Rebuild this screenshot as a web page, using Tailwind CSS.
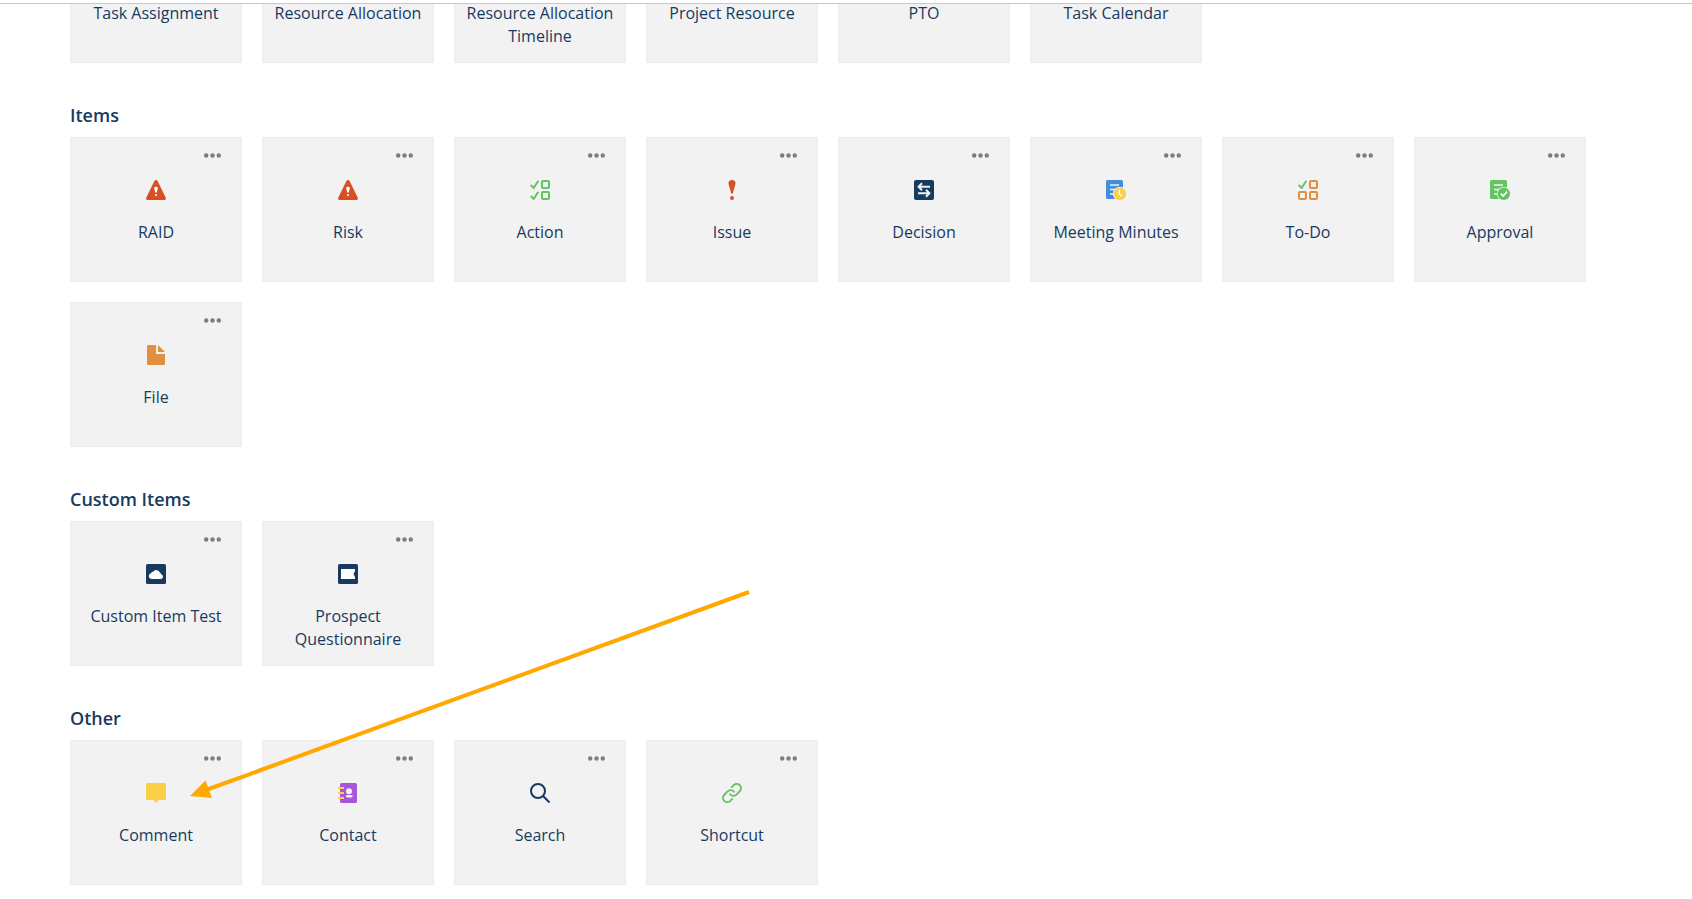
<!DOCTYPE html>
<html lang="en">
<head>
<meta charset="utf-8">
<title>Items</title>
<script src="https://cdn.jsdelivr.net/npm/@tailwindcss/browser@4"></script>
</head>
<body class="relative min-h-screen overflow-x-hidden bg-white font-['Open_Sans',sans-serif] text-base text-[#173a61]">

<svg class="hidden" aria-hidden="true">
  <symbol id="dots" viewBox="0 0 18 6"><g fill="#7d7d7d"><circle cx="2.2" cy="3.5" r="2.2"/><circle cx="8.5" cy="3.5" r="2.2"/><circle cx="14.8" cy="3.5" r="2.2"/></g></symbol>
  <symbol id="warn" viewBox="0 0 20 20"><path fill="#d84f26" d="M8.4.9C9.1-.3 10.9-.3 11.6.9L19.8 17.8C20.3 19 19.7 20 18.5 20H1.5C.3 20-.3 19 .2 17.8Z"/><path fill="#fff" d="M8.3 8.3C8.3 7 9 6.800 10 6.800S11.700 7 11.700 8.300L10.800 12.500H9.200Z"/><circle cx="10" cy="15" r="1.100" fill="#fff"/></symbol>
  <symbol id="action" viewBox="0 0 20 20"><g fill="none" stroke="#62c462" stroke-width="2"><path d="M.7 5 3.7 8 8.3.8M.7 16 3.7 19 8.3 11.8"/><rect x="12" y="1" width="7" height="7" rx="1"/><rect x="12" y="12" width="7" height="7" rx="1"/></g></symbol>
  <symbol id="issue" viewBox="0 0 20 20"><path fill="#d84f26" d="M6.5 3.2C6.5 1 7.9 0 10 0S13.5 1 13.5 3.2C13.5 5.5 11.3 10 10.9 13.5H9.1C8.7 10 6.5 5.5 6.5 3.2Z"/><circle cx="10" cy="18" r="2" fill="#d84f26"/></symbol>
  <symbol id="decision" viewBox="0 0 20 20"><rect width="20" height="20" rx="2" fill="#173a61"/><path fill="none" stroke="#f1f1f1" stroke-width="2" d="M16 6.8H5M8 3.2 4.6 6.8 8 10.2M4 13.2H15M12 9.8 15.4 13.2 12 16.8"/></symbol>
  <symbol id="minutes" viewBox="0 0 20 20"><path fill="#448cde" d="M1.5 0H15.5Q17 0 17 1.5V19H1.5Q0 19 0 17.500V1.500Q0 0 1.500 0Z"/><path stroke="#f1f1f1" stroke-width="1.500" d="M4 5H13M4 9.500H9M4 14H8"/><circle cx="13.800" cy="13.800" r="7" fill="#f1f1f1"/><circle cx="13.800" cy="13.800" r="6.200" fill="#facf46"/><path fill="none" stroke="#fff" stroke-width="1.600" d="M13.300 9.500V14L16 16.500"/></symbol>
  <symbol id="todo" viewBox="0 0 20 20"><g fill="none" stroke="#e0903e" stroke-width="2"><path stroke="#62c462" d="M.7 5 3.700 8 8.300.8"/><rect x="12" y="1" width="7" height="7" rx="1"/><rect x="1" y="12" width="7" height="7" rx="1"/><rect x="12" y="12" width="7" height="7" rx="1"/></g></symbol>
  <symbol id="approval" viewBox="0 0 20 20"><path fill="#62c462" d="M1.500 0H15.500Q17 0 17 1.500V19H1.500Q0 19 0 17.500V1.500Q0 0 1.500 0Z"/><path stroke="#f1f1f1" stroke-width="1.500" d="M4 5H13M4 9.500H9M4 14H8"/><circle cx="13.800" cy="13.800" r="7" fill="#f1f1f1"/><circle cx="13.800" cy="13.800" r="6.200" fill="#62c462"/><path fill="none" stroke="#fff" stroke-width="1.700" d="M10.800 13.600 13.200 16 17 11.600"/></symbol>
  <symbol id="file" viewBox="0 0 20 20"><path fill="#e0903e" d="M2.500 0H10V9H19V18.500Q19 20 17.500 20H2.500Q1 20 1 18.500V1.500Q1 0 2.500 0ZM12 0 19 7H12Z"/></symbol>
  <symbol id="cloud" viewBox="0 0 20 20"><rect width="20" height="20" rx="1.500" fill="#173a61"/><path fill="#fff" d="M5.500 15A2.900 2.900 0 0 1 5 9.300A2.400 2.400 0 0 1 7.600 7.600A3.500 3.500 0 0 1 13.800 8.600A2.500 2.500 0 0 1 15.300 10.500A2.300 2.300 0 0 1 15 15Z"/></symbol>
  <symbol id="ticket" viewBox="0 0 20 20"><rect width="20" height="20" rx="1.500" fill="#173a61"/><path fill="#fff" d="M3 5H17V7L15.500 10 17 13V15H3Z"/></symbol>
  <symbol id="comment" viewBox="0 0 20 20"><path fill="#facf46" d="M1.500 0H18.500Q20 0 20 1.500V15.500Q20 17 18.500 17H12.500L10 20 7.500 17H1.500Q0 17 0 15.500V1.500Q0 0 1.500 0Z"/></symbol>
  <symbol id="contact" viewBox="0 0 20 20"><rect x="2" width="17" height="20" rx="1.500" fill="#a557d8"/><path stroke="#facf46" stroke-width="2" d="M0 5H6M0 10H6M0 15H6"/><circle cx="11" cy="8.200" r="3" fill="#f4eff8"/><rect x="8" y="12" width="6.500" height="2.500" rx="1.200" fill="#f4eff8"/></symbol>
  <symbol id="search" viewBox="0 0 20 20"><g fill="none" stroke="#173a61" stroke-width="2"><circle cx="8" cy="8" r="7"/><path d="M12.800 12.800 19.500 19.500"/></g></symbol>
  <symbol id="link" viewBox="0 0 24 24"><g fill="none" stroke="#62c462" stroke-width="2.300" stroke-linecap="round"><path d="M9.700 13.500a5 5 0 0 0 7.600.4l4-4a5.150 5.150 0 0 0-7.300-7.300l-2.300 2.300"/><path d="M14.300 10.500a5 5 0 0 0-7.600-.4l-4 4a5.150 5.150 0 0 0 7.300 7.300l2.300-2.300"/></g></symbol>
</svg>

<div class="h-1 border-b border-[#c8c8c8]"></div>

<main class="overflow-hidden px-[70px] pb-3">
  <section class="-mt-[86px]" aria-label="Resources">
    <ul class="flex flex-wrap gap-5">
      <li class="h-[145px] w-[172px] border border-[#ececec] bg-[#f2f2f2] px-2 pt-[83px] text-center leading-[23px]"><a href="#">Task Assignment</a></li>
      <li class="h-[145px] w-[172px] border border-[#ececec] bg-[#f2f2f2] px-2 pt-[83px] text-center leading-[23px]"><a href="#">Resource Allocation</a></li>
      <li class="h-[145px] w-[172px] border border-[#ececec] bg-[#f2f2f2] px-2 pt-[83px] text-center leading-[23px]"><a href="#">Resource Allocation Timeline</a></li>
      <li class="h-[145px] w-[172px] border border-[#ececec] bg-[#f2f2f2] px-2 pt-[83px] text-center leading-[23px]"><a href="#">Project Resource</a></li>
      <li class="h-[145px] w-[172px] border border-[#ececec] bg-[#f2f2f2] px-2 pt-[83px] text-center leading-[23px]"><a href="#">PTO</a></li>
      <li class="h-[145px] w-[172px] border border-[#ececec] bg-[#f2f2f2] px-2 pt-[83px] text-center leading-[23px]"><a href="#">Task Calendar</a></li>
    </ul>
  </section>

  <section class="pt-[39px]">
    <h2 class="mb-[9px] text-lg leading-[26px] font-semibold">Items</h2>
    <ul class="flex flex-wrap gap-5">
      <li class="flex h-[145px] w-[172px] flex-col items-center border border-[#ececec] bg-[#f2f2f2] px-2 pt-[14px] text-center leading-[23px]"><button class="mr-[11px] self-end" aria-label="RAID options"><svg class="block h-1.5 w-[18px]"><use href="#dots"/></svg></button><svg class="mt-[22px] size-5 shrink-0"><use href="#warn"/></svg><a href="#" class="mt-[21px]">RAID</a></li>
      <li class="flex h-[145px] w-[172px] flex-col items-center border border-[#ececec] bg-[#f2f2f2] px-2 pt-[14px] text-center leading-[23px]"><button class="mr-[11px] self-end" aria-label="Risk options"><svg class="block h-1.5 w-[18px]"><use href="#dots"/></svg></button><svg class="mt-[22px] size-5 shrink-0"><use href="#warn"/></svg><a href="#" class="mt-[21px]">Risk</a></li>
      <li class="flex h-[145px] w-[172px] flex-col items-center border border-[#ececec] bg-[#f2f2f2] px-2 pt-[14px] text-center leading-[23px]"><button class="mr-[11px] self-end" aria-label="Action options"><svg class="block h-1.5 w-[18px]"><use href="#dots"/></svg></button><svg class="mt-[22px] size-5 shrink-0"><use href="#action"/></svg><a href="#" class="mt-[21px]">Action</a></li>
      <li class="flex h-[145px] w-[172px] flex-col items-center border border-[#ececec] bg-[#f2f2f2] px-2 pt-[14px] text-center leading-[23px]"><button class="mr-[11px] self-end" aria-label="Issue options"><svg class="block h-1.5 w-[18px]"><use href="#dots"/></svg></button><svg class="mt-[22px] size-5 shrink-0"><use href="#issue"/></svg><a href="#" class="mt-[21px]">Issue</a></li>
      <li class="flex h-[145px] w-[172px] flex-col items-center border border-[#ececec] bg-[#f2f2f2] px-2 pt-[14px] text-center leading-[23px]"><button class="mr-[11px] self-end" aria-label="Decision options"><svg class="block h-1.5 w-[18px]"><use href="#dots"/></svg></button><svg class="mt-[22px] size-5 shrink-0"><use href="#decision"/></svg><a href="#" class="mt-[21px]">Decision</a></li>
      <li class="flex h-[145px] w-[172px] flex-col items-center border border-[#ececec] bg-[#f2f2f2] px-2 pt-[14px] text-center leading-[23px]"><button class="mr-[11px] self-end" aria-label="Meeting Minutes options"><svg class="block h-1.5 w-[18px]"><use href="#dots"/></svg></button><svg class="mt-[22px] size-5 shrink-0"><use href="#minutes"/></svg><a href="#" class="mt-[21px]">Meeting Minutes</a></li>
      <li class="flex h-[145px] w-[172px] flex-col items-center border border-[#ececec] bg-[#f2f2f2] px-2 pt-[14px] text-center leading-[23px]"><button class="mr-[11px] self-end" aria-label="To-Do options"><svg class="block h-1.5 w-[18px]"><use href="#dots"/></svg></button><svg class="mt-[22px] size-5 shrink-0"><use href="#todo"/></svg><a href="#" class="mt-[21px]">To-Do</a></li>
      <li class="flex h-[145px] w-[172px] flex-col items-center border border-[#ececec] bg-[#f2f2f2] px-2 pt-[14px] text-center leading-[23px]"><button class="mr-[11px] self-end" aria-label="Approval options"><svg class="block h-1.5 w-[18px]"><use href="#dots"/></svg></button><svg class="mt-[22px] size-5 shrink-0"><use href="#approval"/></svg><a href="#" class="mt-[21px]">Approval</a></li>
      <li class="flex h-[145px] w-[172px] flex-col items-center border border-[#ececec] bg-[#f2f2f2] px-2 pt-[14px] text-center leading-[23px]"><button class="mr-[11px] self-end" aria-label="File options"><svg class="block h-1.5 w-[18px]"><use href="#dots"/></svg></button><svg class="mt-[22px] size-5 shrink-0"><use href="#file"/></svg><a href="#" class="mt-[21px]">File</a></li>
    </ul>
  </section>

  <section class="pt-[39px]">
    <h2 class="mb-[9px] text-lg leading-[26px] font-semibold">Custom Items</h2>
    <ul class="flex flex-wrap gap-5">
      <li class="flex h-[145px] w-[172px] flex-col items-center border border-[#ececec] bg-[#f2f2f2] px-2 pt-[14px] text-center leading-[23px]"><button class="mr-[11px] self-end" aria-label="Custom Item Test options"><svg class="block h-1.5 w-[18px]"><use href="#dots"/></svg></button><svg class="mt-[22px] size-5 shrink-0"><use href="#cloud"/></svg><a href="#" class="mt-[21px]">Custom Item Test</a></li>
      <li class="flex h-[145px] w-[172px] flex-col items-center border border-[#ececec] bg-[#f2f2f2] px-2 pt-[14px] text-center leading-[23px]"><button class="mr-[11px] self-end" aria-label="Prospect Questionnaire options"><svg class="block h-1.5 w-[18px]"><use href="#dots"/></svg></button><svg class="mt-[22px] size-5 shrink-0"><use href="#ticket"/></svg><a href="#" class="mt-[21px]">Prospect Questionnaire</a></li>
    </ul>
  </section>

  <section class="pt-[39px]">
    <h2 class="mb-[9px] text-lg leading-[26px] font-semibold">Other</h2>
    <ul class="flex flex-wrap gap-5">
      <li class="flex h-[145px] w-[172px] flex-col items-center border border-[#ececec] bg-[#f2f2f2] px-2 pt-[14px] text-center leading-[23px]"><button class="mr-[11px] self-end" aria-label="Comment options"><svg class="block h-1.5 w-[18px]"><use href="#dots"/></svg></button><svg class="mt-[22px] size-5 shrink-0"><use href="#comment"/></svg><a href="#" class="mt-[21px]">Comment</a></li>
      <li class="flex h-[145px] w-[172px] flex-col items-center border border-[#ececec] bg-[#f2f2f2] px-2 pt-[14px] text-center leading-[23px]"><button class="mr-[11px] self-end" aria-label="Contact options"><svg class="block h-1.5 w-[18px]"><use href="#dots"/></svg></button><svg class="mt-[22px] size-5 shrink-0"><use href="#contact"/></svg><a href="#" class="mt-[21px]">Contact</a></li>
      <li class="flex h-[145px] w-[172px] flex-col items-center border border-[#ececec] bg-[#f2f2f2] px-2 pt-[14px] text-center leading-[23px]"><button class="mr-[11px] self-end" aria-label="Search options"><svg class="block h-1.5 w-[18px]"><use href="#dots"/></svg></button><svg class="mt-[22px] size-5 shrink-0"><use href="#search"/></svg><a href="#" class="mt-[21px]">Search</a></li>
      <li class="flex h-[145px] w-[172px] flex-col items-center border border-[#ececec] bg-[#f2f2f2] px-2 pt-[14px] text-center leading-[23px]"><button class="mr-[11px] self-end" aria-label="Shortcut options"><svg class="block h-1.5 w-[18px]"><use href="#dots"/></svg></button><svg class="mt-[22px] size-5 shrink-0"><use href="#link"/></svg><a href="#" class="mt-[21px]">Shortcut</a></li>
    </ul>
  </section>
</main>

<!-- Arrow pointing at the Comment card -->
<svg class="pointer-events-none absolute top-[588px] left-[188px] h-[216px] w-[564px]" viewBox="188 588 564 216" aria-hidden="true">
  <path d="M749 592 206 790" stroke="#ffa800" stroke-width="4"/>
  <path d="M190 796 205.500 780.500 212 798Z" fill="#ffa800"/>
</svg>
</body>
</html>
